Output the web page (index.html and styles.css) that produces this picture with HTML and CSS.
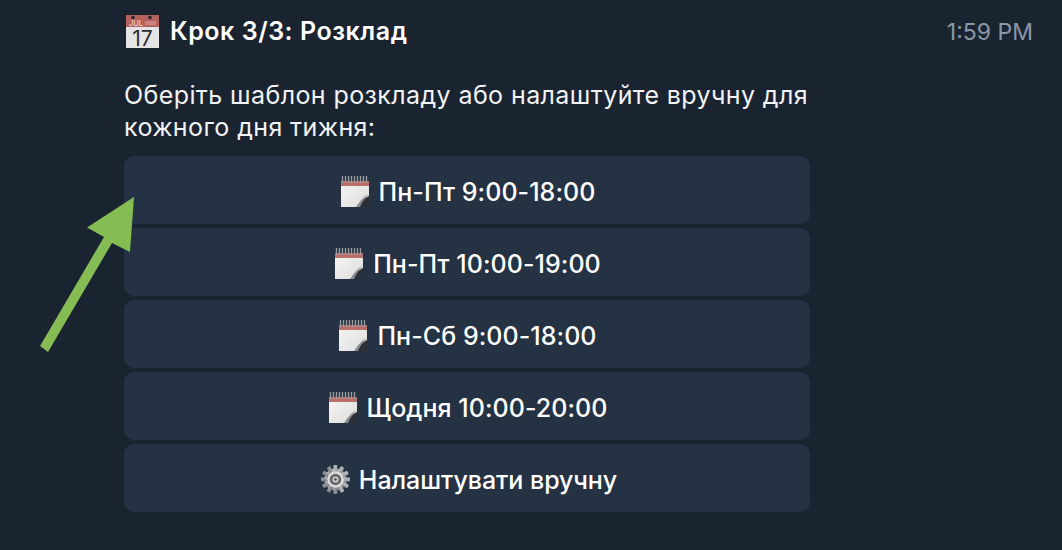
FILE: index.html
```html
<!DOCTYPE html>
<html lang="uk">
<head>
<meta charset="utf-8">
<title>Розклад</title>
<link rel="stylesheet" href="styles.css">
</head>
<body>
<svg class="defs" width="0" height="0" aria-hidden="true">
  <defs>
    <linearGradient id="pageFold" x1="0" y1="0" x2="1" y2="1">
      <stop offset="0" stop-color="#f6f5f3"/>
      <stop offset="1" stop-color="#dddddd"/>
    </linearGradient>
    <linearGradient id="gearBody" x1="0" y1="0" x2="1" y2="1">
      <stop offset="0" stop-color="#c4c6c9"/>
      <stop offset="1" stop-color="#74777b"/>
    </linearGradient>
    <symbol id="notepad" viewBox="0 0 28 31">
      <path d="M0 6h28v17c-2 1-5 4-8 8H0z" fill="url(#pageFold)"/>
      <rect x="0" y="5" width="28" height="5" fill="#b9706c"/>
      <path d="M1.500 0v7M4.500 0v7M7.500 0v7M10.500 0v7M13.500 0v7M16.500 0v7M19.500 0v7M22.500 0v7M25.500 0v7" stroke="#9a9b9e" stroke-width="1.300"/>
      <path d="M18 31c2-4 5-9 10-11v11z" fill="#2b3038"/>
      <path d="M15 31c3-4 6-10 13-13-4 3-7 8-9 13z" fill="#8c8d8f"/>
    </symbol>
    <symbol id="gear" viewBox="0 0 30 30">
      <g fill="url(#gearBody)">
        <circle cx="15" cy="15" r="11.500"/>
        <rect x="13" y="0" width="4" height="30" rx="1"/>
        <rect x="13" y="0" width="4" height="30" rx="1" transform="rotate(30 15 15)"/>
        <rect x="13" y="0" width="4" height="30" rx="1" transform="rotate(60 15 15)"/>
        <rect x="13" y="0" width="4" height="30" rx="1" transform="rotate(90 15 15)"/>
        <rect x="13" y="0" width="4" height="30" rx="1" transform="rotate(120 15 15)"/>
        <rect x="13" y="0" width="4" height="30" rx="1" transform="rotate(150 15 15)"/>
      </g>
      <circle cx="15" cy="15" r="8.500" fill="#dcdcdd"/>
      <circle cx="15" cy="15" r="6" fill="#68696d"/>
      <circle cx="15" cy="15" r="3" fill="#d9dadb"/>
      <circle cx="15" cy="15" r="1.500" fill="#55575b"/>
    </symbol>
  </defs>
</svg>

<main class="chat">
  <header class="head">
    <h1 class="title">
      <svg class="calendar" viewBox="0 0 33 33" aria-hidden="true">
        <rect width="33" height="33" fill="#e4e4e4"/>
        <rect width="33" height="12" fill="#b5625f"/>
        <circle cx="7" cy="2.500" r="1.800" fill="#26282c"/>
        <circle cx="24" cy="2.500" r="1.800" fill="#26282c"/>
        <rect x="19" y="6" width="11" height="4" fill="#c98482"/>
        <text class="cal-month" x="3" y="10.500">JUL</text>
        <text class="cal-day" x="16.500" y="30.500">17</text>
      </svg>
      <span>Крок 3/3: Розклад</span>
    </h1>
    <time class="time">1:59 PM</time>
  </header>

  <p class="intro">Оберіть шаблон розкладу або налаштуйте вручну для кожного дня тижня:</p>

  <div class="keyboard">
    <button class="key"><svg class="icon"><use href="#notepad"/></svg>Пн-Пт 9:00-18:00</button>
    <button class="key"><svg class="icon"><use href="#notepad"/></svg>Пн-Пт 10:00-19:00</button>
    <button class="key"><svg class="icon"><use href="#notepad"/></svg>Пн-Сб 9:00-18:00</button>
    <button class="key"><svg class="icon"><use href="#notepad"/></svg>Щодня 10:00-20:00</button>
    <button class="key key-gear"><svg class="icon-gear"><use href="#gear"/></svg>Налаштувати вручну</button>
  </div>
</main>

<svg class="arrow" viewBox="0 0 1062 550" aria-hidden="true">
  <polygon points="134,197 87,227.500 104,237 40,346 48,352 112,243 130,252" fill="#86bc54"/>
</svg>
</body>
</html>
```
FILE: styles.css
```css
* { box-sizing: border-box; }
html, body { margin: 0; padding: 0; }
body {
  width: 1062px;
  height: 550px;
  overflow: hidden;
  position: relative;
  background: #1a2330;
  color: #fff;
  font-family: Inter, "Liberation Sans", sans-serif;
}
.defs { position: absolute; }
.chat {
  display: flex;
  flex-direction: column;
  padding: 13px 29px 0 124px;
}
.head {
  display: flex;
  align-items: center;
  justify-content: space-between;
  height: 36px;
}
.title {
  display: flex;
  align-items: center;
  gap: 11px;
  margin: 0;
  font-size: 25px;
  font-weight: 600;
  line-height: 36px;
  letter-spacing: 0.55px;
}
.calendar { width: 33px; height: 33px; margin-left: 2px; overflow: visible; }
.cal-month {
  font-size: 7.500px;
  font-weight: 500;
  letter-spacing: 0;
  fill: #eccfce;
}
.cal-day {
  font-size: 21px;
  font-weight: 400;
  letter-spacing: 0;
  text-anchor: middle;
  fill: #2c2e32;
}
.time {
  padding-top: 2px;
  font-size: 23px;
  color: #8a97a8;
  letter-spacing: 0;
}
.intro {
  width: 686px;
  margin: 30px 0 0;
  font-size: 25px;
  line-height: 32px;
  letter-spacing: 0.4px;
  color: #f2f3f4;
}
.keyboard {
  display: flex;
  flex-direction: column;
  gap: 4px;
  width: 686px;
  margin-top: 13px;
}
.key {
  display: flex;
  align-items: center;
  justify-content: center;
  gap: 10px;
  height: 68px;
  padding: 3px 0 0 2px;
  border: 0;
  border-radius: 10px;
  background: #253244;
  color: #fff;
  font: 500 25px/32px Inter, "Liberation Sans", sans-serif;
  letter-spacing: 0.05px;
}
.key-gear { gap: 9px; padding-left: 4px; letter-spacing: -0.05px; }
.icon { width: 28px; height: 31px; flex: none; }
.icon-gear { width: 29px; height: 29px; flex: none; }
.arrow {
  position: absolute;
  left: 0;
  top: 0;
  width: 1062px;
  height: 550px;
  pointer-events: none;
}
```
